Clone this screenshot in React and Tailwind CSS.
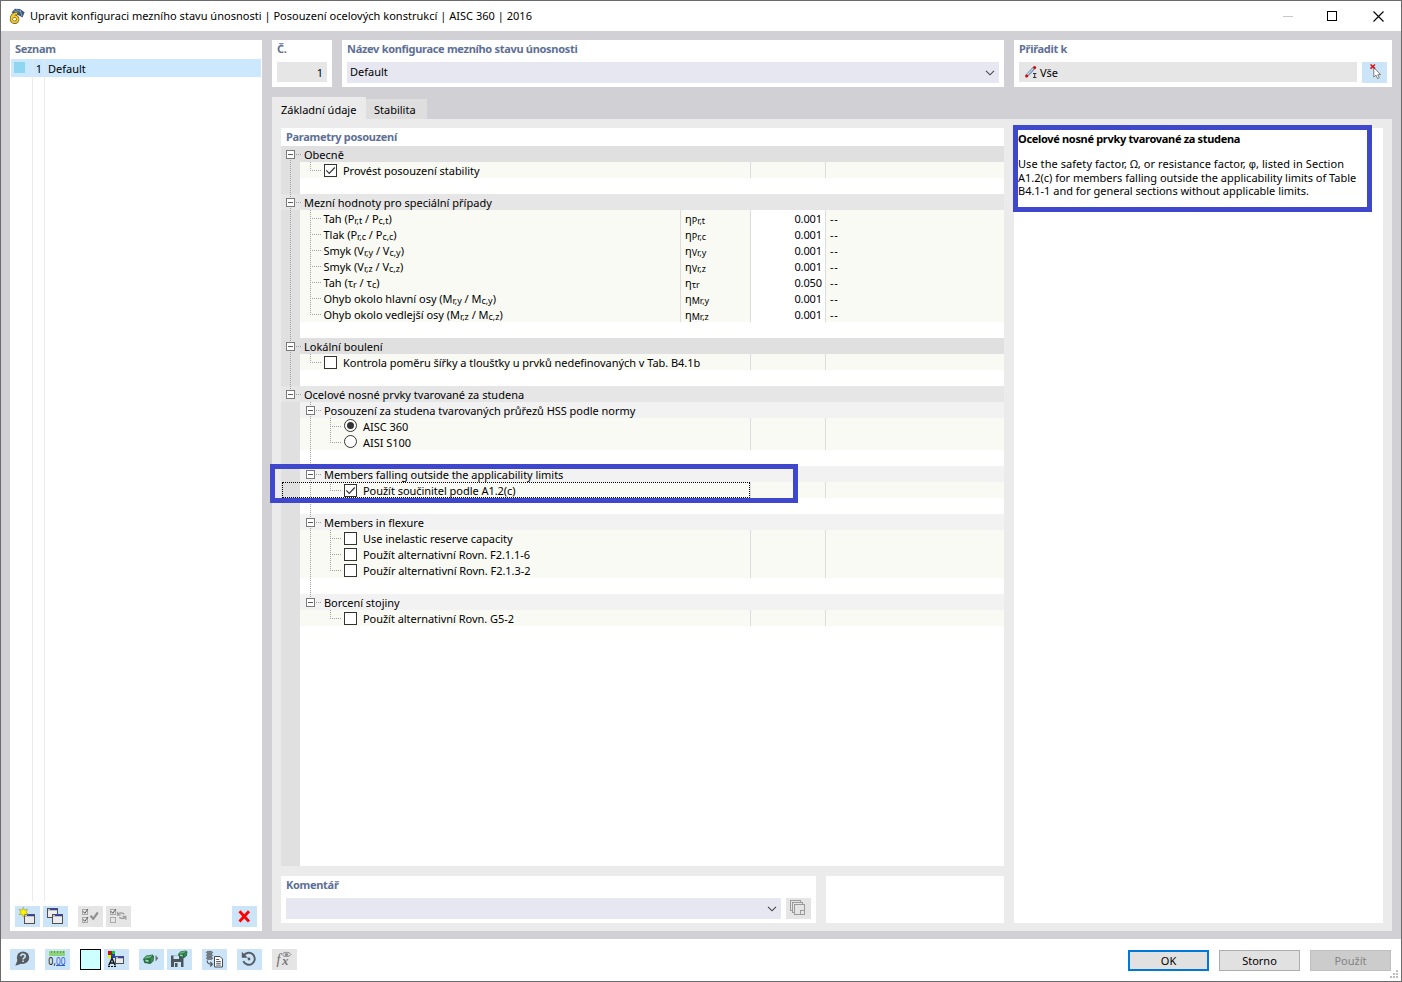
import React, { useState } from 'react'

// ---- tree data ----
const sub = (base, index) => ({ base, index })

const RATIOS = [
  { id: 'prt', label: ['Tah (', sub('P', 'r,t'), ' / ', sub('P', 'c,t'), ')'], symbol: 'Pr,t', value: '0.001' },
  { id: 'prc', label: ['Tlak (', sub('P', 'r,c'), ' / ', sub('P', 'c,c'), ')'], symbol: 'Pr,c', value: '0.001' },
  { id: 'vry', label: ['Smyk (', sub('V', 'r,y'), ' / ', sub('V', 'c,y'), ')'], symbol: 'Vr,y', value: '0.001' },
  { id: 'vrz', label: ['Smyk (', sub('V', 'r,z'), ' / ', sub('V', 'c,z'), ')'], symbol: 'Vr,z', value: '0.001' },
  { id: 'tr', label: ['Tah (', sub('τ', 'r'), ' / ', sub('τ', 'c'), ')'], symbol: 'τr', value: '0.050' },
  { id: 'mry', label: ['Ohyb okolo hlavní osy (', sub('M', 'r,y'), ' / ', sub('M', 'c,y'), ')'], symbol: 'Mr,y', value: '0.001' },
  { id: 'mrz', label: ['Ohyb okolo vedlejší osy (', sub('M', 'r,z'), ' / ', sub('M', 'c,z'), ')'], symbol: 'Mr,z', value: '0.001' },
]

// ---- tree pieces ----
const DOTS_V = 'absolute left-[10px] h-2 w-px bg-[repeating-linear-gradient(to_bottom,#a0a0a0_0_1px,transparent_1px_2px)]'
const DOTS_H = 'absolute left-[10px] top-2 h-px w-[11px] bg-[repeating-linear-gradient(to_right,#a0a0a0_0_1px,transparent_1px_2px)]'

// One 20px wide step of the tree: any of the connector halves plus the expander.
function Guide({ up, down, across, box }) {
  return (
    <div className="relative h-4 w-5 shrink-0">
      {up && <div className={`${DOTS_V} top-0`} />}
      {down && <div className={`${DOTS_V} top-2`} />}
      {across && <div className={DOTS_H} />}
      {box && (
        <div className="absolute left-[6px] top-1 flex size-[9px] items-center justify-center border border-[#7a7a7a] bg-white">
          <div className="h-px w-[5px] bg-[#5a5a5a]" />
        </div>
      )}
    </div>
  )
}

function Gutter({ tone = 'bg-[#e0e0e0]', ...guide }) {
  return (
    <div className={`flex w-[19px] shrink-0 justify-end ${tone}`}>
      <Guide {...guide} />
    </div>
  )
}

function GroupRow({ title, first, last, tone }) {
  return (
    <div className={`flex h-4 ${tone}`}>
      <Gutter tone="" up={!first} down={!last} across box />
      <span className="pl-1 leading-[18px]">{title}</span>
    </div>
  )
}

function SubGroupRow({ title, last }) {
  return (
    <div className="flex h-4 bg-[#f2f2f2]">
      <Gutter />
      <Guide up down={!last} across box />
      <span className="pl-1 leading-[18px] tracking-[-0.03px]">{title}</span>
    </div>
  )
}

function GapRow({ main, nested }) {
  return (
    <div className="flex h-4">
      <Gutter up={main} down={main} />
      {nested && <Guide up down />}
    </div>
  )
}

function CheckBox({ checked, onChange }) {
  return (
    <button onClick={onChange} className="mt-0.5 flex size-[13px] shrink-0 items-center justify-center border border-[#333] bg-white">
      {checked && (
        <svg width="11" height="11" viewBox="0 0 11 11" fill="none" stroke="#333" strokeWidth="1.2">
          <path d="M1.3 5.4 4.2 8.3 9.8 2.5" />
        </svg>
      )}
    </button>
  )
}

function Radio({ checked, onChange }) {
  return (
    <button onClick={onChange} className="mt-px flex size-[13px] shrink-0 items-center justify-center rounded-full border border-[#333] bg-white">
      {checked && <span className="size-[7px] rounded-full bg-[#333]" />}
    </button>
  )
}

function LeafRow({ depth = 1, main, branch, last, control, children, focused }) {
  return (
    <div className="relative flex h-4">
      <Gutter up={main} down={main} />
      <div className="flex min-w-0 flex-1 bg-[#f9faf4]">
        <div className="flex w-[450px] shrink-0">
          {depth === 2 && <Guide up={branch} down={branch} />}
          <Guide up down={!last} across />
          <div className="flex gap-1.5 pl-1">
            {control}
            <span className="whitespace-nowrap leading-[18px] tracking-[-0.04px]">{children}</span>
          </div>
        </div>
        <div className="w-[75px] shrink-0 border-l border-[#dcdcdc]" />
        <div className="flex-1 border-l border-[#dcdcdc]" />
      </div>
      {focused && <div className="absolute left-px top-0 h-4 w-[468px] border border-dotted border-black" />}
    </div>
  )
}

function RatioRow({ row, last }) {
  return (
    <div className="flex h-4">
      <Gutter up down />
      <div className="flex min-w-0 flex-1 bg-[#f9faf4]">
        <div className="flex w-[380px] shrink-0">
          <Guide up down={!last} across />
          <span className="whitespace-pre pl-[3.5px] leading-[18px] tracking-[-0.03px]">
            {row.label.map((part, i) => (typeof part === 'string'
              ? part
              : <React.Fragment key={i}>{part.base}<span className="relative top-px text-[9px]">{part.index}</span></React.Fragment>))}
          </span>
        </div>
        <div className="w-[70px] shrink-0 border-l border-[#dcdcdc] pl-1 leading-[18px]">
          η<span className="relative top-px text-[9px]">{row.symbol}</span>
        </div>
        <div className="w-[75px] shrink-0 border-l border-[#dcdcdc] bg-white pr-[3px] text-right leading-[18px] tracking-[-0.1px]">{row.value}</div>
        <div className="flex-1 border-l border-[#dcdcdc] pl-1 leading-[18px] tracking-[0.6px]">--</div>
      </div>
    </div>
  )
}

// ---- shared bits ----
function Heading({ children, className = '' }) {
  return <div className={`font-bold leading-[18px] tracking-[-0.3px] text-[#5d6f96] ${className}`}>{children}</div>
}

function Chevron() {
  return (
    <svg width="10" height="6" viewBox="0 0 10 6" fill="none" stroke="#444" strokeWidth="1.1"><path d="M1 .8 5 4.8 9 .8" /></svg>
  )
}

function Tool({ disabled, children }) {
  return (
    <button disabled={disabled} className={`h-[21px] w-[25px] shrink-0 ${disabled ? 'bg-[#e5e5e5]' : 'bg-[#cce4f7]'}`}>
      <svg width="25" height="21" viewBox="0 0 25 21" fill="none">{children}</svg>
    </button>
  )
}

// small window glyph used by several tools
function Win({ x, y, w = 11, h = 10 }) {
  return (
    <g shapeRendering="crispEdges">
      <rect x={x + 0.5} y={y + 0.5} width={w - 1} height={h - 1} fill="#ececec" stroke="#505050" />
      <rect x={x + 1} y={y + 1} width={w - 2} height="2" fill="#c4c4c4" />
      <rect x={x + 3} y={y + 1} width={w - 4} height="1" fill="#2438e8" />
    </g>
  )
}

function GreenBox({ x, y }) {
  return (
    <g transform={`translate(${x} ${y})`}>
      <path d="M0 4.5 3.5 1 10.5 0 12 2 11.5 6.5 8 9.5 1.5 8.5Z" fill="#286b42" />
      <path d="M1 4.3 4 1.6 10.3.8 7.8 3.6Z" fill="#62b57d" />
      <path d="M8 4.2 11 1.8V6L8.3 8.6Z" fill="#3c8a57" />
      <path d="M2.5 5.2 6 5.6V7.6L2.8 7Z" fill="#a4d8b5" />
    </g>
  )
}

function LogoIcon() {
  return (
    <svg width="17" height="17" viewBox="0 0 17 17" className="shrink-0">
      <path d="M3.5 4.5 7 .8 12 1 16.6 4.2 14.5 9.5 11 7.5Z" fill="#3d5878" />
      <path d="M6 2.8 10 4.4M8 1.4 13 4M12 2 14 8" stroke="#91a9c4" strokeWidth=".9" />
      <path d="M9.2 5.6C5.6 5 3.4 7.8 3.4 11.2a3.2 3 0 1 0 3.2-2.9c-1.6 0-2.7.9-3.2 2.2" fill="none" stroke="#5b4a12" strokeWidth="3.2" />
      <path d="M9.2 5.6C5.6 5 3.4 7.8 3.4 11.2a3.2 3 0 1 0 3.2-2.9c-1.6 0-2.7.9-3.2 2.2" fill="none" stroke="#f2c92e" strokeWidth="2.1" />
    </svg>
  )
}

function CheckListIcon({ mode }) {
  return (
    <>
      <g stroke="#aaa" shapeRendering="crispEdges"><rect x="4.5" y="3.5" width="5" height="5" /><rect x="4.5" y="11.5" width="5" height="5" /></g>
      <path d="M5 5.3 6.8 7.3 10 3" stroke="#555" />
      {mode === 'all' ? (
        <>
          <path d="M5 13.3 6.8 15.3 10 11" stroke="#555" />
          <path d="M12.5 9.8 15.2 12.8 19.8 6.5" stroke="#909090" strokeWidth="2.2" />
        </>
      ) : (
        <path d="M11.5 8.7C13 6.6 16.3 6.6 18.3 8.2M19.8 10.8C18 13 15.4 12.8 13.2 11.3M11.5 5.8v3.3h3.2M19.8 13.8v-3.3h-3.2" stroke="#a0a0a0" strokeWidth="1.4" />
      )}
    </>
  )
}

function TitleBar() {
  return (
    <div className="flex h-[30px] items-center bg-white pl-[7px] text-black">
      <LogoIcon />
      <span className="flex-1 pl-[5px] tracking-[0.02px]">
        Upravit konfiguraci mezního stavu únosnosti | Posouzení ocelových konstrukcí | AISC 360 | 2016
      </span>
      <div className="flex items-center pr-[17px]">
        <div className="h-px w-[10px] bg-[#c8c8c8]" />
        <div className="ml-[34px] mr-9 size-[10px] border border-black" />
        <svg width="11" height="11" viewBox="0 0 11 11" stroke="#000" strokeWidth="1.1"><path d="M.5.5l10 10M10.5.5l-10 10" /></svg>
      </div>
    </div>
  )
}

function ListPanel() {
  return (
    <div className="flex w-[252px] shrink-0 flex-col bg-white">
      <Heading className="h-[19px] pl-[5px]">Seznam</Heading>
      <div className="mx-px flex flex-1 flex-col">
        <div className="flex h-[18px] bg-[#cce8ff]">
          <div className="w-[21px] pl-[3px] pt-[3px]"><div className="size-[11px] bg-[#8fd6f2]" /></div>
          <div className="w-3 border-l border-[#dfe7ed] pr-0.5 text-right leading-5">1</div>
          <div className="flex-1 border-l border-[#dfe7ed] pl-[3px] leading-5">Default</div>
        </div>
        <div className="flex flex-1">
          <div className="w-[21px]" />
          <div className="w-3 border-l border-[#ebebeb]" />
          <div className="flex-1 border-l border-[#ebebeb]" />
        </div>
      </div>
      <div className="flex h-[30px] items-start pl-[5px] pr-[5px] pt-[5px]">
        <div className="flex flex-1 gap-[3px]">
          <Tool>
            <Win x={9} y={8} />
            <path d="M8.3 1.2 9.4 4.2 12.6 3 11 6 13.2 8.2 9.8 8.2 8.5 11.2 7.2 8.2 4 8.8 5.9 6.2 4 3.4 7.2 4.2Z" fill="#fff200" stroke="#9b9a30" strokeWidth=".6" />
          </Tool>
          <Tool><Win x={4} y={2} /><Win x={9} y={8} /></Tool>
          <span className="w-1" />
          <Tool disabled><CheckListIcon mode="all" /></Tool>
          <Tool disabled><CheckListIcon mode="invert" /></Tool>
        </div>
        <Tool><path d="M7.5 5.2 17 15.5M17 5.2 7.5 15.5" stroke="#f00" strokeWidth="2.8" /></Tool>
      </div>
    </div>
  )
}

function HeaderPanels() {
  return (
    <div className="flex h-[47px] gap-[10px]">
      <div className="w-[60px] bg-white px-[5px]">
        <Heading className="h-[22px]">Č.</Heading>
        <div className="h-5 bg-[#e6e6e6] pr-1 text-right leading-[22px]">1</div>
      </div>
      <div className="w-[662px] bg-white px-[5px]">
        <Heading className="h-[22px]">Název konfigurace mezního stavu únosnosti</Heading>
        <div className="flex h-[21px] justify-between bg-[#e7e7f2] pl-[3px] pr-1">
          <span className="leading-5">Default</span>
          <span className="flex items-center"><Chevron /></span>
        </div>
      </div>
      <div className="w-[378px] bg-white px-[5px]">
        <Heading className="h-[22px]">Přiřadit k</Heading>
        <div className="flex gap-[5px]">
          <div className="flex h-5 flex-1 gap-[3px] bg-[#e6e6e6] pl-1.5">
            <svg width="12" height="12" viewBox="0 0 12 12" className="mt-1">
              <path d="M1.5 10 9.5 1.5" stroke="#6f8fae" strokeWidth="3.2" /><path d="M1.5 9.5 9 1.8" stroke="#c3d7ea" strokeWidth="1.2" />
              <circle cx="1.6" cy="10" r="1.5" fill="#e00000" /><circle cx="9.6" cy="1.6" r="1.5" fill="#e00000" />
              <path d="M8 7.5h3.4M8 11.5h3.4M9.7 7.5v4" stroke="#333" />
            </svg>
            <span className="leading-[22px]">Vše</span>
          </div>
          <Tool>
            <path d="M11.8 5.5V15l2.2-1.8 1.6 3.4 1.7-.8-1.5-3.2h2.8Z" fill="#fff" stroke="#707070" strokeWidth=".9" />
            <path d="M8.5 2.5 13 6.6M13 2.5 8.5 6.6" stroke="#e01010" strokeWidth="1.5" />
          </Tool>
        </div>
      </div>
    </div>
  )
}

function ParameterTree() {
  const [checks, setChecks] = useState({ stability: true, a12: true })
  const [norm, setNorm] = useState('aisc')
  const box = (key) => <CheckBox checked={!!checks[key]} onChange={() => setChecks((c) => ({ ...c, [key]: !c[key] }))} />

  return (
    <div className="flex h-[738px] flex-col bg-white">
      <Heading className="h-[18px] pl-[5px]">Parametry posouzení</Heading>
      <GroupRow title="Obecně" first tone="bg-[#e0e0e0]" />
      <LeafRow main last control={box('stability')}>Provést posouzení stability</LeafRow>
      <GapRow main />
      <GroupRow title="Mezní hodnoty pro speciální případy" tone="bg-[#e6e6e6]" />
      {RATIOS.map((row, i) => <RatioRow key={row.id} row={row} last={i === RATIOS.length - 1} />)}
      <GapRow main />
      <GroupRow title="Lokální boulení" tone="bg-[#e0e0e0]" />
      <LeafRow main last control={box('ratio')}>Kontrola poměru šířky a tloušťky u prvků nedefinovaných v Tab. B4.1b</LeafRow>
      <GapRow main />
      <GroupRow title="Ocelové nosné prvky tvarované za studena" last tone="bg-[#e6e6e6]" />

      <SubGroupRow title="Posouzení za studena tvarovaných průřezů HSS podle normy" />
      <LeafRow depth={2} branch control={<Radio checked={norm === 'aisc'} onChange={() => setNorm('aisc')} />}>AISC 360</LeafRow>
      <LeafRow depth={2} branch last control={<Radio checked={norm === 'aisi'} onChange={() => setNorm('aisi')} />}>AISI S100</LeafRow>
      <GapRow nested />
      <SubGroupRow title="Members falling outside the applicability limits" />
      <LeafRow depth={2} branch last focused control={box('a12')}>Použít součinitel podle A1.2(c)</LeafRow>
      <GapRow nested />
      <SubGroupRow title="Members in flexure" />
      <LeafRow depth={2} branch control={box('reserve')}>Use inelastic reserve capacity</LeafRow>
      <LeafRow depth={2} branch control={box('f211')}>Použít alternativní Rovn. F2.1.1-6</LeafRow>
      <LeafRow depth={2} branch last control={box('f213')}>Použír alternativní Rovn. F2.1.3-2</LeafRow>
      <GapRow nested />
      <SubGroupRow title="Borcení stojiny" last />
      <LeafRow depth={2} last control={box('g52')}>Použít alternativní Rovn. G5-2</LeafRow>
      <div className="w-[19px] flex-1 bg-[#e0e0e0]" />
    </div>
  )
}

function CommentRow() {
  return (
    <div className="flex h-[47px] gap-[10px]">
      <div className="w-[535px] bg-white px-[5px]">
        <Heading className="h-[22px]">Komentář</Heading>
        <div className="flex gap-[5px]">
          <div className="flex h-[21px] flex-1 items-center justify-end bg-[#e7e7f2] pr-1"><Chevron /></div>
          <Tool disabled>
            <g stroke="#9a9a9a" fill="#e5e5e5" shapeRendering="crispEdges">
              <rect x="4.5" y="2.5" width="10" height="10" /><rect x="6.5" y="4.5" width="10" height="10" /><rect x="8.5" y="6.5" width="10" height="10" />
              <path d="M14.5 16.5v-4h4" />
            </g>
          </Tool>
        </div>
      </div>
      <div className="flex-1 bg-white" />
    </div>
  )
}

function InfoPanel() {
  return (
    <div className="w-[369px] bg-white pl-1 pt-1 text-black">
      <div className="font-bold leading-[13px] tracking-[-0.32px]">Ocelové nosné prvky tvarované za studena</div>
      <p className="pt-3 leading-[13px] tracking-[-0.02px]">
        <span className="tracking-[0.06px]">Use the safety factor, Ω, or resistance factor, <span className="font-['Liberation_Sans']">φ</span>, listed in Section</span><br />
        A1.2(c) for members falling outside the applicability limits of Table<br />
        B4.1-1 and for general sections without applicable limits.
      </p>
    </div>
  )
}

function FooterTools() {
  return (
    <div className="flex flex-1">
      <Tool>
        <circle cx="13" cy="8.7" r="6.2" fill="#555c63" /><path d="M8 10 5.3 16.8 12 14.5Z" fill="#555c63" />
        <path d="M10.8 7.2c0-2.8 4.4-2.6 4.4 0 0 1.6-2.1 1.6-2.1 3.2M13.1 11.5v1.5" stroke="#cce4f7" strokeWidth="1.6" />
      </Tool>
      <span className="w-[10px]" />
      <Tool>
        <rect x="4" y="2" width="16" height="5" fill="#8ed47a" /><path d="M6.5 2v2M9.5 2v2M12.5 2v2M15.5 2v2M18.5 2v2" stroke="#5aa046" />
        <text x="3.3" y="15.5" fontSize="10.5" fill="#111" textLength="7.5" lengthAdjust="spacingAndGlyphs">0,</text>
        <text x="11" y="15.5" fontSize="10.5" fill="#2f5fd0" textLength="9.5" lengthAdjust="spacingAndGlyphs">00</text>
        <path d="M11 16.5h9" stroke="#2f5fd0" />
      </Tool>
      <span className="w-[10px]" />
      <div className="h-[21px] w-[21px] border border-black bg-[#ccffff]" />
      <span className="w-[3px]" />
      <Tool>
        <g shapeRendering="crispEdges">
          <rect x="4" y="2" width="7" height="7" fill="#444" />
          <rect x="4" y="2" width="3" height="3" fill="#f00000" /><rect x="8" y="2" width="3" height="3" fill="#20c030" />
          <rect x="4" y="6" width="3" height="3" fill="#f5f000" /><rect x="8" y="6" width="3" height="3" fill="#2040e0" />
        </g>
        <path d="M4.7 16.5 8 9.5 11.3 16.5M5.8 14h4.6" stroke="#111" strokeWidth="1.4" />
        <path d="M4 17.5h8" stroke="#111" strokeDasharray="2 1" />
        <Win x={11} y={7} w={9} h={8} />
      </Tool>
      <span className="w-[10px]" />
      <Tool><g transform="translate(4 5.5) scale(.92 1)"><GreenBox x={0} y={0} /></g><path d="M16.5 6 19.3 9.3 16.5 12.6Z" fill="#6a6f76" /></Tool>
      <span className="w-[3px]" />
      <Tool>
        <path d="M4 6.5H15L16.5 8.3V18H4Z" fill="#4d545c" /><path d="M6.5 6.5H12V10H6.5ZM7 13h7v5H7Z" fill="#cce4f7" /><path d="M8 14h2.5v4H8Z" fill="#4d545c" />
        <g transform="translate(11 1.5) scale(.78)"><GreenBox x={0} y={0} /></g>
      </Tool>
      <span className="w-[10px]" />
      <Tool>
        <g fill="#7c858c" stroke="#535b62" strokeWidth=".7"><ellipse cx="7.5" cy="9.3" rx="3.2" ry="1.2" /><ellipse cx="7.5" cy="6.4" rx="3.2" ry="1.2" /><ellipse cx="7.5" cy="3.5" rx="3.2" ry="1.2" /></g>
        <path d="M5.2 11.5c0 2.5 1 3.8 4.5 3.8M8.2 13 10.5 15.2 8.2 17.5" stroke="#535b62" strokeWidth="1.2" />
        <path d="M12.5 7.5H18L20.5 10V18H12.5Z" fill="#fff" stroke="#444b52" /><path d="M14.2 10.5h3M14.2 12.5h4.6M14.2 14.3h4.6M14.2 16.1h4.6" stroke="#444b52" strokeWidth=".9" />
      </Tool>
      <span className="w-[10px]" />
      <Tool>
        <path d="M6.8 6.4A6 6 0 1 1 6.3 12.2" stroke="#555c63" strokeWidth="1.9" /><path d="M4.8 2.8V8.8H10.8Z" fill="#555c63" /><circle cx="12" cy="10" r="1.4" fill="#555c63" />
      </Tool>
      <span className="w-[10px]" />
      <Tool disabled>
        <text x="4.5" y="15" fontFamily="Liberation Serif, serif" fontStyle="italic" fontSize="14" fill="#6a6a6a">f</text>
        <text x="10" y="16" fontFamily="Liberation Serif, serif" fontStyle="italic" fontWeight="bold" fontSize="13" fill="#777">x</text>
        <path d="M10 5.5C12 2.6 17 2.6 19 5.5 17 8.3 12 8.3 10 5.5Z" stroke="#888" /><circle cx="14.5" cy="5.5" r="1.6" fill="#888" />
      </Tool>
    </div>
  )
}

function SizeGrip() {
  return (
    <svg width="8" height="8" viewBox="0 0 8 8" fill="#bdbdbd" className="absolute bottom-[3px] right-[3px]" shapeRendering="crispEdges">
      <path d="M6 0h2v2H6zM3 3h2v2H3zM6 3h2v2H6zM0 6h2v2H0zM3 6h2v2H3zM6 6h2v2H6z" />
    </svg>
  )
}

export default function App() {
  return (
    <div className="relative flex h-[982px] w-[1402px] flex-col overflow-hidden border border-[#6b6a6c] bg-[#d1d0d5] font-['Noto_Sans','Open_Sans',sans-serif] text-[11px] text-black">
      <TitleBar />
      <div className="flex h-[908px] gap-[10px] pb-2 pl-[9px] pr-[9px] pt-[9px]">
        <ListPanel />
        <div className="flex w-[1120px] flex-col">
          <HeaderPanels />
          <div className="flex h-[32px] items-end pt-[10px]">
            <div className="h-[22px] w-[94px] bg-[#ebebeb] pl-[9px] leading-[25px]">Základní údaje</div>
            <div className="h-5 w-[61px] bg-[#dedede] pl-2 leading-[21px]">Stabilita</div>
          </div>
          <div className="flex flex-1 gap-[10px] bg-[#ebebeb] px-[9px] pb-2 pt-[9px]">
            <div className="flex w-[723px] flex-col gap-[10px]">
              <ParameterTree />
              <CommentRow />
            </div>
            <InfoPanel />
          </div>
        </div>
      </div>
      <div className="relative flex flex-1 bg-white pl-[9px] pr-[10px] pt-[10px]">
        <FooterTools />
        <div className="flex gap-[10px] pt-px text-center">
          <button className="h-[21px] w-[81px] border-2 border-[#0078d7] bg-[#e1e1e1] leading-[18px]">OK</button>
          <button className="h-[21px] w-[81px] border border-[#adadad] bg-[#e1e1e1] leading-5">Storno</button>
          <button disabled className="h-[21px] w-[81px] border border-[#bfbfbf] bg-[#cccccc] leading-5 text-[#838383]">Použít</button>
        </div>
        <SizeGrip />
      </div>

      {/* callout frames over the dialog */}
      <div className="pointer-events-none absolute left-[1012px] top-[124px] h-[87px] w-[359px] border-[5px] border-[#3f48cc]" />
      <div className="pointer-events-none absolute left-[269px] top-[463px] h-[39px] w-[528px] border-[5px] border-[#3f48cc]" />
    </div>
  )
}
